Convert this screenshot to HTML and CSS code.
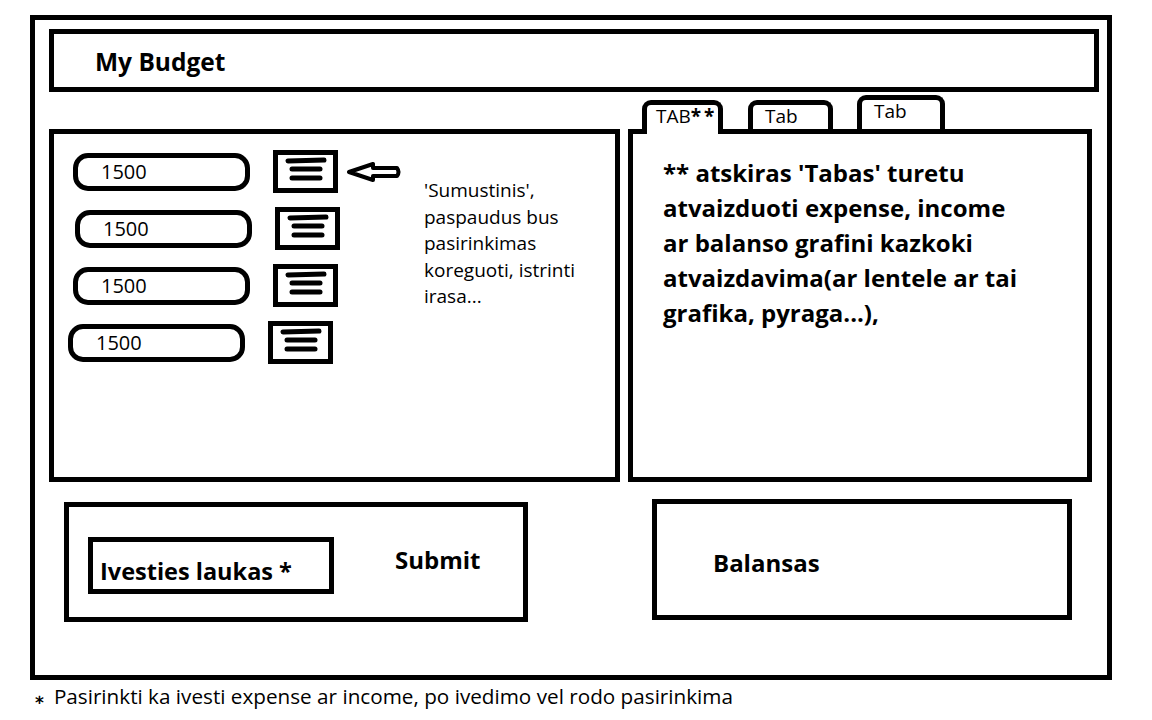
FILE: index.html
```html
<!DOCTYPE html>
<html lang="lt">
<head>
    <meta charset="UTF-8">
    <meta name="viewport" content="width=device-width, initial-scale=1.0">
    <title>My Budget</title>
    <link rel="stylesheet" href="styles.css">
</head>
<body>
    <div class="frame">
        <header class="topbar">
            <h1>My Budget</h1>
        </header>

        <div class="middle">
            <section class="entries-panel">
                <div class="entries">
                    <div class="entry">
                        <div class="amount">1500</div>
                        <div class="menu-btn">
                            <svg width="55" height="33" viewBox="0 0 55 33">
                                <line x1="10" y1="6" x2="46" y2="5" />
                                <line x1="14" y1="14" x2="42" y2="14" />
                                <line x1="14" y1="23" x2="42" y2="23" />
                            </svg>
                        </div>
                        <!-- arrow pointing at the "sumustinis" button -->
                        <svg class="arrow" width="56" height="22" viewBox="0 0 56 22">
                            <path d="M3,11 L27,3 L27,7 L51,7 Q54,11 51,15 L27,15 L27,19 Z" />
                        </svg>
                    </div>
                    <div class="entry shift-right">
                        <div class="amount">1500</div>
                        <div class="menu-btn">
                            <svg width="55" height="33" viewBox="0 0 55 33">
                                <line x1="10" y1="6" x2="46" y2="5" />
                                <line x1="14" y1="14" x2="42" y2="14" />
                                <line x1="14" y1="23" x2="42" y2="23" />
                            </svg>
                        </div>
                    </div>
                    <div class="entry">
                        <div class="amount">1500</div>
                        <div class="menu-btn">
                            <svg width="55" height="33" viewBox="0 0 55 33">
                                <line x1="10" y1="6" x2="46" y2="5" />
                                <line x1="14" y1="14" x2="42" y2="14" />
                                <line x1="14" y1="23" x2="42" y2="23" />
                            </svg>
                        </div>
                    </div>
                    <div class="entry shift-left">
                        <div class="amount">1500</div>
                        <div class="menu-btn">
                            <svg width="55" height="33" viewBox="0 0 55 33">
                                <line x1="10" y1="6" x2="46" y2="5" />
                                <line x1="14" y1="14" x2="42" y2="14" />
                                <line x1="14" y1="23" x2="42" y2="23" />
                            </svg>
                        </div>
                    </div>
                </div>

                <p class="note">'Sumustinis', paspaudus bus pasirinkimas koreguoti, istrinti irasa...</p>
            </section>

            <section class="charts">
                <div class="tabs">
                    <div class="tab active">TAB<b>**</b></div>
                    <div class="tab">Tab</div>
                    <div class="tab tall">Tab</div>
                </div>
                <div class="chart-panel">
                    <p>** atskiras 'Tabas' turetu atvaizduoti expense, income ar balanso grafini kazkoki atvaizdavima(ar lentele ar tai grafika, pyraga...),</p>
                </div>
            </section>
        </div>

        <div class="bottom">
            <div class="input-panel">
                <div class="input-field">Ivesties laukas *</div>
                <div class="submit">Submit</div>
            </div>
            <div class="balance-panel">Balansas</div>
        </div>
    </div>

    <p class="footnote"><span class="star">⁎</span>Pasirinkti ka ivesti expense ar income, po ivedimo vel rodo pasirinkima</p>
</body>
</html>
```

FILE: styles.css
```css
* {
    box-sizing: border-box;
}

body {
    font-family: "Open Sans", "Liberation Sans", sans-serif;
    background-color: #fff;
    color: #000;
    margin: 0;
    padding: 15px 0 0 30px;
}

.frame {
    width: 1082px;
    height: 665px;
    border: 5px solid #000;
}

.topbar {
    display: flex;
    align-items: center;
    height: 63px;
    margin: 9px 8px 0 14px;
    padding: 2px 0 0 41px;
    border: 5px solid #000;
}

.topbar h1 {
    margin: 0;
    font-size: 24.5px;
    font-weight: bold;
}

.middle {
    display: flex;
    gap: 8px;
    margin: 3px 0 0 14px;
}

/* left panel with the list of entries */
.entries-panel {
    display: flex;
    width: 571px;
    height: 353px;
    margin-top: 34px;
    padding: 16px 0 0 19px;
    border: 5px solid #000;
}

.entries {
    display: flex;
    flex-direction: column;
    gap: 14px;
}

.entry {
    display: flex;
    align-items: center;
    height: 43px;
}

.entry.shift-right {
    margin-left: 2px;
}

.entry.shift-left {
    margin-left: -5px;
}

.amount {
    width: 177px;
    height: 38px;
    padding-left: 23px;
    border: 5px solid #000;
    border-radius: 15px;
    font-size: 20px;
    line-height: 27px;
}

.menu-btn {
    width: 65px;
    height: 43px;
    margin-left: 23px;
    border: 5px solid #000;
}

.menu-btn svg {
    display: block;
}

.menu-btn line {
    stroke: #000;
    stroke-width: 5;
    stroke-linecap: round;
}

.arrow {
    margin-left: 8px;
}

.arrow path {
    fill: #fff;
    stroke: #000;
    stroke-width: 4;
    stroke-linejoin: round;
}

.note {
    width: 165px;
    margin: 27px 0 0 22px;
    font-size: 19px;
    line-height: 26.5px;
}

/* right panel with tabs */
.charts {
    display: flex;
    flex-direction: column;
    width: 464px;
}

.tabs {
    display: flex;
    align-items: flex-end;
    height: 34px;
    padding-left: 14px;
}

.tab {
    height: 29px;
    padding-left: 12px;
    border: 5px solid #000;
    border-bottom: none;
    border-radius: 9px 9px 0 0;
    background: #fff;
    font-size: 19px;
    line-height: 22px;
}

.tab.active {
    position: relative;
    z-index: 1;
    width: 81px;
    height: 34px;
    margin-bottom: -5px;
    padding-left: 9px;
}

.tab.active b {
    font-weight: bold;
    letter-spacing: 3px;
}

.tab:nth-child(2) {
    width: 85px;
    margin-left: 25px;
}

.tab.tall {
    width: 88px;
    height: 34px;
    margin-left: 24px;
    line-height: 22px;
}

.chart-panel {
    height: 353px;
    padding: 21px 0 0 30px;
    border: 5px solid #000;
}

.chart-panel p {
    width: 362px;
    margin: 0;
    font-size: 24px;
    font-weight: bold;
    line-height: 35px;
}

/* bottom row */
.bottom {
    display: flex;
    align-items: flex-start;
    margin: 17px 0 0 29px;
}

.input-panel {
    display: flex;
    align-items: flex-start;
    width: 464px;
    height: 120px;
    margin-top: 3px;
    padding: 30px 0 0 19px;
    border: 5px solid #000;
}

.input-field {
    width: 246px;
    height: 57px;
    padding: 14px 0 0 7px;
    border: 5px solid #000;
    font-size: 23.5px;
    font-weight: bold;
    line-height: 30px;
}

.submit {
    margin: 8px 0 0 61px;
    font-size: 24px;
    font-weight: bold;
    line-height: 30px;
}

.balance-panel {
    width: 420px;
    height: 121px;
    margin-left: 124px;
    padding: 44px 0 0 56px;
    border: 5px solid #000;
    font-size: 24px;
    font-weight: bold;
    line-height: 30px;
}

.footnote {
    margin: 4px 0 0 5px;
    font-size: 20.7px;
    line-height: 24px;
}

.footnote .star {
    margin-right: 10px;
    font-family: "DejaVu Sans", sans-serif;
    font-weight: bold;
    font-size: 17px;
}
```
